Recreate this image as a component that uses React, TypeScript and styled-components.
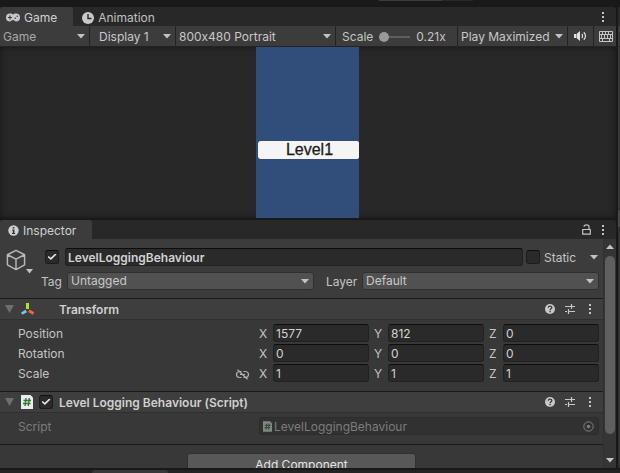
import React, { useId, useState } from "react";
import styled, { createGlobalStyle, css } from "styled-components";

const GlobalStyle = createGlobalStyle`
  *, *::before, *::after { box-sizing: border-box; }
  html, body { margin: 0; background: #191919; }
  body, button, input, select {
    font-family: Inter, "Liberation Sans", sans-serif;
    font-size: 12px;
    line-height: 16px;
    font-feature-settings: "calt" 0;
    color: #c4c4c4;
  }
  button { border: 0; padding: 0; background: none; }
  svg { display: block; flex: none; }
`;

/* ---------- window frame ---------- */

const Window = styled.div`
  display: grid;
  grid-template-columns: minmax(0, 1fr) 2px 2px;
  grid-template-rows: 7px minmax(0, 211fr) 2px minmax(0, 248fr) 5px;
  height: 100vh;
  background: #191919;
  overflow: hidden;
`;

const TopEdge = styled.div`
  grid-column: 1 / -1;
  display: flex;
  height: 1px;
  padding-left: 379px;
`;

const EdgePiece = styled.div<{ $tone: string; $width: number }>`
  width: ${(p) => p.$width}px;
  background: ${(p) => p.$tone};
`;

const BottomEdge = styled.div`
  grid-column: 1 / -1;
  grid-row: 5;
  margin-top: 2px;
  padding-left: 92px;
  background: #232323;
`;

const BottomTab = styled.div`
  width: 76px;
  height: 3px;
  border-radius: 3px 3px 0 0;
  background: #383838;
`;

const Neighbour = styled.div`
  grid-column: 3;
  grid-row: 2 / 5;
  background: linear-gradient(
    #282828 0 19px,
    #3c3c3c 19px 39px,
    #232323 39px 40px,
    #383838 40px 203px,
    #4a4a4a 203px 220px,
    #303030 220px
  );
`;

const Panel = styled.section<{ $row: number }>`
  grid-column: 1;
  grid-row: ${(p) => p.$row};
  display: flex;
  flex-direction: column;
  min-height: 0;
  overflow: hidden;
  border-radius: 0 3px 0 0;
`;

const TabBar = styled.div`
  display: flex;
  flex: none;
  height: 19px;
  background: #282828;
`;

const Tab = styled.button<{ $active?: boolean; $start: number }>`
  display: flex;
  align-items: center;
  gap: 4px;
  padding: 2px 16px 0 ${(p) => p.$start}px;
  border-radius: 3px 3px 0 0;
  color: ${(p) => (p.$active ? "#d0d0d0" : "#c0c0c0")};
  background: ${(p) => (p.$active ? "#3c3c3c" : "transparent")};
`;

const TabTools = styled.div`
  display: flex;
  align-items: center;
  gap: 10px;
  margin-left: auto;
  padding-right: 11px;
`;

const IconButton = styled.button`
  display: flex;
  align-items: center;
  justify-content: center;
`;

/* ---------- game panel ---------- */

const Toolbar = styled.div`
  display: flex;
  flex: none;
  height: 21px;
  background: #3c3c3c;
  border-bottom: 1px solid #232323;
`;

const toolbarCell = css`
  border-right: 1px solid #232323;
`;

const PickerBox = styled.div<{ $width?: number; $field?: boolean }>`
  display: grid;
  align-items: center;
  ${(p) => (p.$width ? `width: ${p.$width}px; flex: none;` : "flex: 1 1 0; min-width: 0;")}
  ${(p) =>
    p.$field
      ? css`
          height: 18px;
          border: 1px solid #303030;
          border-radius: 3px;
          background: #515151;
        `
      : css`
          padding-top: 1px;
          ${toolbarCell}
        `}
`;

const PickerSelect = styled.select<{ $pad: number; $dim?: boolean }>`
  grid-area: 1 / 1;
  width: 100%;
  min-width: 0;
  height: 16px;
  padding: 0 14px 0 ${(p) => p.$pad}px;
  appearance: none;
  border: 0;
  outline: 0;
  background: transparent;
  color: ${(p) => (p.$dim ? "#a8a8a8" : "#c8c8c8")};
`;

const PickerArrow = styled.span`
  grid-area: 1 / 1;
  justify-self: end;
  margin-right: 4px;
  pointer-events: none;
`;

const ScaleCell = styled.label`
  display: flex;
  align-items: center;
  flex: none;
  gap: 6px;
  width: 122px;
  padding: 1px 0 0 6px;
  ${toolbarCell}
`;

const Slider = styled.input`
  width: 31px;
  height: 12px;
  margin: 0;
  appearance: none;
  background: linear-gradient(#5e5e5e, #5e5e5e) center / 100% 2px no-repeat;
  &::-webkit-slider-thumb {
    appearance: none;
    width: 10px;
    height: 10px;
    border-radius: 50%;
    background: #999999;
  }
`;

const ToolButton = styled(IconButton)<{ $width: number }>`
  flex: none;
  width: ${(p) => p.$width}px;
  ${toolbarCell}
  &:last-child {
    padding-left: 2px;
    border-right: 0;
  }
`;

const GameView = styled.div`
  display: flex;
  flex: 1;
  min-height: 0;
  justify-content: center;
  padding-right: 1px;
  background: #282828;
  box-shadow: inset 0 0 7px #161616;
`;

const GameScreen = styled.div`
  width: 103px;
  padding: 94px 0 0 2px;
  background: #314d79;
`;

const LevelButton = styled.button`
  width: 100%;
  height: 18px;
  padding-left: 2px;
  border-radius: 3px 2px 2px 3px;
  background: #f5f5f5;
  color: #1c1c1c;
  font-family: "Liberation Sans", Arial, sans-serif;
  font-size: 16px;
  line-height: 18px;
  -webkit-text-stroke: 0.3px #1c1c1c;
`;

/* ---------- inspector ---------- */

const InspectorBody = styled.div`
  display: flex;
  flex: 1;
  min-height: 0;
  background: #383838;
`;

const Content = styled.div`
  flex: 1;
  min-width: 0;
  overflow: hidden;
`;

const ObjectHeader = styled.header`
  display: flex;
  gap: 7px;
  height: 60px;
  padding: 9px 4px 0 6px;
  background: #3c3c3c;
  border-bottom: 1px solid #1a1a1a;
`;

const ObjectIcon = styled.button`
  display: flex;
  align-items: flex-end;
  width: 28px;
  height: 26px;
`;

const CubeSlot = styled.span`
  align-self: flex-start;
  padding-top: 1px;
`;

const ObjectFields = styled.div`
  display: flex;
  flex: 1;
  min-width: 0;
  flex-direction: column;
  gap: 6px;
`;

const FieldLine = styled.div`
  display: flex;
  align-items: center;
  height: 18px;
`;

const NameLine = styled(FieldLine)`
  padding-left: 4px;
`;

const TagLabel = styled.label<{ $width: number; $lead?: number }>`
  flex: none;
  width: ${(p) => p.$width}px;
  margin-left: ${(p) => p.$lead ?? 0}px;
  padding-top: 2px;
`;

const CheckBox = styled.input`
  flex: none;
  display: grid;
  place-items: center;
  width: 14px;
  height: 14px;
  margin: 0;
  appearance: none;
  border: 1px solid #1c1c1c;
  border-top-color: #0d0d0d;
  border-radius: 3px;
  background: #2a2a2a;
  &:checked::before {
    content: "";
    width: 9px;
    height: 7px;
    background: #e4e4e4;
    clip-path: polygon(0 50%, 14% 36%, 36% 62%, 86% 0, 100% 14%, 38% 94%);
  }
`;

const TextField = styled.input<{ $bold?: boolean }>`
  flex: 1;
  width: 100%;
  min-width: 0;
  height: 18px;
  padding: 0 2px;
  border: 1px solid #212121;
  border-top-color: #0d0d0d;
  border-radius: 3px;
  outline: 0;
  background: #2a2a2a;
  color: #d2d2d2;
  font-weight: ${(p) => (p.$bold ? 600 : 400)};
`;

const NameField = styled(TextField)`
  margin: 0 3px 0 6px;
`;

const StaticLabel = styled.label`
  flex: none;
  width: 44px;
  margin-left: 4px;
  padding-top: 2px;
`;

const StaticMenu = styled(IconButton)`
  width: 11px;
  height: 18px;
`;

const ComponentBlock = styled.section`
  border-bottom: 1px solid #1a1a1a;
`;

const ComponentHeader = styled.header`
  display: flex;
  align-items: center;
  gap: 6px;
  height: 21px;
  padding: 0 3px 0 5px;
  background: #3e3e3e;
  border-bottom: 1px solid #303030;
`;

const FoldButton = styled(IconButton)`
  width: 10px;
  height: 18px;
  justify-content: flex-start;
`;

const ComponentTitle = styled.h2<{ $lead: number }>`
  flex: 1;
  margin: 0 0 0 ${(p) => p.$lead}px;
  padding-top: 2px;
  font-size: 12px;
  line-height: 16px;
  font-weight: 600;
  color: #d0d0d0;
`;

const HeaderTools = styled.div`
  display: flex;
`;

const HeaderTool = styled(IconButton)`
  width: 20px;
  height: 18px;
`;

const Rows = styled.div`
  display: grid;
  gap: 2px;
  padding: 4px 4px 9px 18px;
`;

const PropertyRow = styled.div<{ $dim?: boolean }>`
  display: grid;
  grid-template-columns: 241px minmax(0, 1fr);
  align-items: center;
  height: 18px;
  color: ${(p) => (p.$dim ? "#7c7c7c" : "#c4c4c4")};
`;

const PropertyName = styled.div`
  display: flex;
  align-items: center;
  justify-content: space-between;
  padding: 2px 10px 0 0;
`;

const Axes = styled.div`
  display: grid;
  grid-template-columns: repeat(3, minmax(0, 1fr));
  gap: 5px;
`;

const Axis = styled.label`
  display: grid;
  grid-template-columns: 14px minmax(0, 1fr);
  align-items: center;
`;

const AxisName = styled.span`
  padding-top: 2px;
`;

const ObjectField = styled.button`
  display: flex;
  align-items: center;
  gap: 2px;
  width: 100%;
  height: 18px;
  padding: 0 4px 0 3px;
  border: 1px solid #2c2c2c;
  border-radius: 3px;
  background: #313131;
  color: #7c7c7c;
  text-align: left;
`;

const ObjectFieldText = styled.span`
  flex: 1;
  padding-top: 2px;
`;

const AddButton = styled.button`
  display: block;
  width: 229px;
  height: 24px;
  margin: 8px auto 0;
  border: 1px solid #303030;
  border-radius: 3px;
  background: #585858;
  color: #e4e4e4;
`;

const ScrollBar = styled.div`
  display: flex;
  flex: none;
  flex-direction: column;
  align-items: center;
  width: 13px;
  padding: 5px 0;
  background: #353535;
  border-left: 1px solid #303030;
`;

const ScrollThumb = styled.div`
  width: 10px;
  height: 178px;
  margin: 7px 0 auto;
  border-radius: 5px;
  background: #5f5f5f;
`;

/* ---------- icons ---------- */

const Triangle = ({ up, size = 8, tone = "#c4c4c4" }: { up?: boolean; size?: number; tone?: string }) => (
  <svg width={size} height="5" viewBox="0 0 8 5" preserveAspectRatio="none" fill={tone}>
    <path d={up ? "M0 5 4 0.5 8 5z" : "M0 0h8L4 4.5z"} />
  </svg>
);

const Foldout = () => (
  <svg width="9" height="8" viewBox="0 0 9 8" fill="#6e6e6e">
    <path d="M0 0h9L4.500 8z" />
  </svg>
);

const Dots = () => (
  <svg width="4" height="12" viewBox="0 0 4 12" fill="#c4c4c4">
    <path d="M1 1h2v2H1zM1 5h2v2H1zM1 9h2v2H1z" />
  </svg>
);

const Gamepad = () => (
  <svg width="14" height="9" viewBox="0 0 14 9">
    <path d="M4 .5h1.500l.8.8h1.400l.8-.8H10a4 4 0 0 1 0 8c-1 0-1.500-1.500-3-1.500S5 8.500 4 8.500a4 4 0 0 1 0-8z" fill="#c8c8c8" />
    <path d="M2 4.500h4M4 2.500v4" stroke="#3c3c3c" strokeWidth="1.200" />
    <circle cx="11.300" cy="3.300" r=".8" fill="#3c3c3c" />
    <circle cx="9.300" cy="5.300" r=".8" fill="#3c3c3c" />
  </svg>
);

const Clock = () => (
  <svg width="12" height="12" viewBox="0 0 12 12">
    <circle cx="6" cy="6" r="6" fill="#c8c8c8" />
    <path d="M6 2v4.500h3.500" fill="none" stroke="#282828" strokeWidth="1.400" />
  </svg>
);

const Info = () => (
  <svg width="11" height="11" viewBox="0 0 11 11">
    <circle cx="5.500" cy="5.500" r="5.200" fill="#cfcfcf" />
    <path d="M4.700 2h1.700v1.500H4.700zM4.200 4.500h2.200V8h.7v1H4V8h.8V5.400h-.6z" fill="#303030" />
  </svg>
);

const Speaker = () => (
  <svg width="13" height="10" viewBox="0 0 13 10">
    <path d="M0 3h2v4H0zM2.500 3 6 0v10L2.500 7z" fill="#e2e2e2" />
    <path d="M7.800 3c1 1 1 3 0 4M9.800 1.200c2.200 2 2.200 5.600 0 7.600" fill="none" stroke="#e2e2e2" strokeWidth="1.200" />
  </svg>
);

const Keyboard = () => (
  <svg width="14" height="11" viewBox="0 0 14 11" fill="none" stroke="#c4c4c4">
    <path d="M.5.500h13v10H.5zM.5 3.500h13M.5 7.500h13M3.500.5v3M6.500.5v3M9.500.5v3M2.500 3.500v4M5.500 3.500v4M8.500 3.500v4M11.500 3.500v4M3.500 7.500v3M10.500 7.500v3" />
  </svg>
);

const Lock = () => (
  <svg width="9" height="11" viewBox="0 0 9 11" fill="none" stroke="#c4c4c4">
    <path d="M.7 5.500h7.600v4.700H.7zM2 2.800C2 .2 7 .2 7 2.800v2.700" strokeWidth="1.200" />
  </svg>
);

const Cube = () => (
  <svg width="20" height="22" viewBox="0 0 21 22" fill="none" stroke="#b8b8b8" strokeWidth="1.500" strokeLinejoin="round">
    <path d="M10.500 1 19.500 5.500v10.500L10.500 21 1.500 16V5.500zM1.500 5.500l9 4.500 9-4.500M10.500 10v11" />
  </svg>
);

const AxesIcon = () => (
  <svg width="14" height="14" viewBox="0 0 14 14" fill="none">
    <path d="M6.500 1v6" stroke="#a6e22e" strokeWidth="3" />
    <path d="m5.300 9-4.600 2.600" stroke="#6cc7f5" strokeWidth="2.800" />
    <path d="m7.800 8.800 4.800 2.700" stroke="#f2643d" strokeWidth="2.800" />
  </svg>
);

const ScriptIcon = ({ dim }: { dim?: boolean }) => (
  <svg width={dim ? 9 : 12} height={dim ? 11 : 14} viewBox="0 0 12 14">
    <path d="M0 0h9.500L12 2.500V14H0z" fill={dim ? "#858585" : "#ececec"} />
    <path d="M5 3 4 11M8.300 3l-1 8M2.500 5.500h7.500M2 8.500h7.500" stroke={dim ? "#2c5330" : "#2c7d32"} strokeWidth="1.400" />
  </svg>
);

const Help = () => (
  <svg width="10" height="10" viewBox="0 0 10 10">
    <circle cx="5" cy="5" r="5" fill="#c8c8c8" />
    <path d="M3.300 3.800C3.300 1.700 6.800 1.700 6.800 3.700 6.800 4.800 5.100 4.900 5.100 6.200" fill="none" stroke="#3a3a3a" strokeWidth="1.300" />
    <path d="M4.400 7h1.400v1.300H4.400z" fill="#3a3a3a" />
  </svg>
);

const Preset = () => (
  <svg width="10" height="10" viewBox="0 0 10 10" fill="none" stroke="#c8c8c8">
    <path d="M0 2.500h6M6.500 2.500h3.500M6.500 0v5M0 7.500h2M3.500 7.500H10M3.500 5v5" strokeWidth="1.200" />
  </svg>
);

const Unlinked = () => (
  <svg width="13" height="11" viewBox="0 0 13 11" fill="none" stroke="#b4b4b4" strokeWidth="1.200">
    <path d="M5.500 2.500H3.500a3 3 0 0 0 0 6h2M7.500 2.500h2a3 3 0 0 1 0 6h-2M4 5.500h5M1.500.8l10 9.500" />
  </svg>
);

const Target = () => (
  <svg width="11" height="11" viewBox="0 0 11 11">
    <circle cx="5.500" cy="5.500" r="4.700" fill="none" stroke="#808080" />
    <circle cx="5.500" cy="5.500" r="1.700" fill="#808080" />
  </svg>
);

/* ---------- parts ---------- */

type PickerProps = {
  label?: string;
  id?: string;
  value: string;
  width?: number;
  pad: number;
  field?: boolean;
  dim?: boolean;
};

const Picker = ({ label, id, value, width, pad, field, dim }: PickerProps) => (
  <PickerBox $width={width} $field={field}>
    <PickerSelect id={id} aria-label={label} $pad={pad} $dim={dim} defaultValue={value}>
      <option>{value}</option>
    </PickerSelect>
    <PickerArrow>
      <Triangle />
    </PickerArrow>
  </PickerBox>
);

const ComponentTools = () => (
  <HeaderTools>
    <HeaderTool aria-label="Help"><Help /></HeaderTool>
    <HeaderTool aria-label="Presets"><Preset /></HeaderTool>
    <HeaderTool aria-label="More"><Dots /></HeaderTool>
  </HeaderTools>
);

const transform = [
  { name: "Position", values: ["1577", "812", "0"] },
  { name: "Rotation", values: ["0", "0", "0"] },
  { name: "Scale", values: ["1", "1", "1"], linkable: true },
];

const VectorRow = ({ name, values, linkable }: { name: string; values: string[]; linkable?: boolean }) => (
  <PropertyRow role="group" aria-label={name}>
    <PropertyName>
      {name}
      {linkable && <IconButton aria-label="Constrain proportions"><Unlinked /></IconButton>}
    </PropertyName>
    <Axes>
      {["X", "Y", "Z"].map((axis, i) => (
        <Axis key={axis}>
          <AxisName>{axis}</AxisName>
          <TextField defaultValue={values[i]} />
        </Axis>
      ))}
    </Axes>
  </PropertyRow>
);

const GamePanel = () => {
  const [zoom, setZoom] = useState(21);
  return (
    <Panel $row={2}>
      <TabBar>
        <Tab $active $start={6}><Gamepad />Game</Tab>
        <Tab $start={9}><Clock />Animation</Tab>
        <TabTools>
          <IconButton aria-label="Game tab menu"><Dots /></IconButton>
        </TabTools>
      </TabBar>
      <Toolbar>
        <Picker label="View" value="Game" width={90} pad={3} dim />
        <Picker label="Display" value="Display 1" width={86} pad={9} />
        <Picker label="Resolution" value="800x480 Portrait" pad={3} />
        <ScaleCell>
          Scale
          <Slider
            type="range"
            min={21}
            max={500}
            value={zoom}
            onChange={(e) => setZoom(Number(e.target.value))}
          />
          {(zoom / 100).toFixed(2)}x
        </ScaleCell>
        <Picker label="Play mode" value="Play Maximized" width={110} pad={3} />
        <ToolButton $width={26} aria-label="Mute audio"><Speaker /></ToolButton>
        <ToolButton $width={22} aria-label="Shortcuts"><Keyboard /></ToolButton>
      </Toolbar>
      <GameView>
        <GameScreen>
          <LevelButton>Level1</LevelButton>
        </GameScreen>
      </GameView>
    </Panel>
  );
};

const InspectorPanel = () => {
  const id = useId();
  return (
    <Panel $row={4}>
      <TabBar>
        <Tab $active $start={8}><Info />Inspector</Tab>
        <TabTools>
          <IconButton aria-label="Lock"><Lock /></IconButton>
          <IconButton aria-label="Inspector menu"><Dots /></IconButton>
        </TabTools>
      </TabBar>
      <InspectorBody>
        <Content>
          <ObjectHeader>
            <ObjectIcon aria-label="Select icon">
              <CubeSlot><Cube /></CubeSlot>
              <Triangle size={7} />
            </ObjectIcon>
            <ObjectFields>
              <NameLine>
                <CheckBox type="checkbox" defaultChecked aria-label="Active" />
                <NameField $bold defaultValue="LevelLoggingBehaviour" aria-label="Name" />
                <CheckBox type="checkbox" id={`${id}static`} />
                <StaticLabel htmlFor={`${id}static`}>Static</StaticLabel>
                <StaticMenu aria-label="Static options"><Triangle /></StaticMenu>
              </NameLine>
              <FieldLine>
                <TagLabel htmlFor={`${id}tag`} $width={26}>Tag</TagLabel>
                <Picker id={`${id}tag`} value="Untagged" pad={3} field />
                <TagLabel htmlFor={`${id}layer`} $width={36} $lead={12}>Layer</TagLabel>
                <Picker id={`${id}layer`} value="Default" width={237} pad={3} field />
              </FieldLine>
            </ObjectFields>
          </ObjectHeader>

          <ComponentBlock>
            <ComponentHeader>
              <FoldButton aria-label="Collapse Transform"><Foldout /></FoldButton>
              <AxesIcon />
              <ComponentTitle $lead={18}>Transform</ComponentTitle>
              <ComponentTools />
            </ComponentHeader>
            <Rows>
              {transform.map((row) => <VectorRow key={row.name} {...row} />)}
            </Rows>
          </ComponentBlock>

          <ComponentBlock>
            <ComponentHeader>
              <FoldButton aria-label="Collapse script"><Foldout /></FoldButton>
              <ScriptIcon />
              <CheckBox type="checkbox" defaultChecked aria-label="Enabled" />
              <ComponentTitle $lead={0}>Level Logging Behaviour (Script)</ComponentTitle>
              <ComponentTools />
            </ComponentHeader>
            <Rows>
              <PropertyRow $dim>
                <PropertyName>Script</PropertyName>
                <ObjectField aria-label="Script">
                  <ScriptIcon dim />
                  <ObjectFieldText>LevelLoggingBehaviour</ObjectFieldText>
                  <Target />
                </ObjectField>
              </PropertyRow>
            </Rows>
          </ComponentBlock>

          <AddButton>Add Component</AddButton>
        </Content>
        <ScrollBar>
          <Triangle up />
          <ScrollThumb />
          <Triangle />
        </ScrollBar>
      </InspectorBody>
    </Panel>
  );
};

export default function App() {
  return (
    <>
      <GlobalStyle />
      <Window>
        <TopEdge>
          <EdgePiece $tone="#3c3c3c" $width={63} />
          <EdgePiece $tone="#282828" $width={31} />
        </TopEdge>
        <GamePanel />
        <InspectorPanel />
        <Neighbour />
        <BottomEdge>
          <BottomTab />
        </BottomEdge>
      </Window>
    </>
  );
}
